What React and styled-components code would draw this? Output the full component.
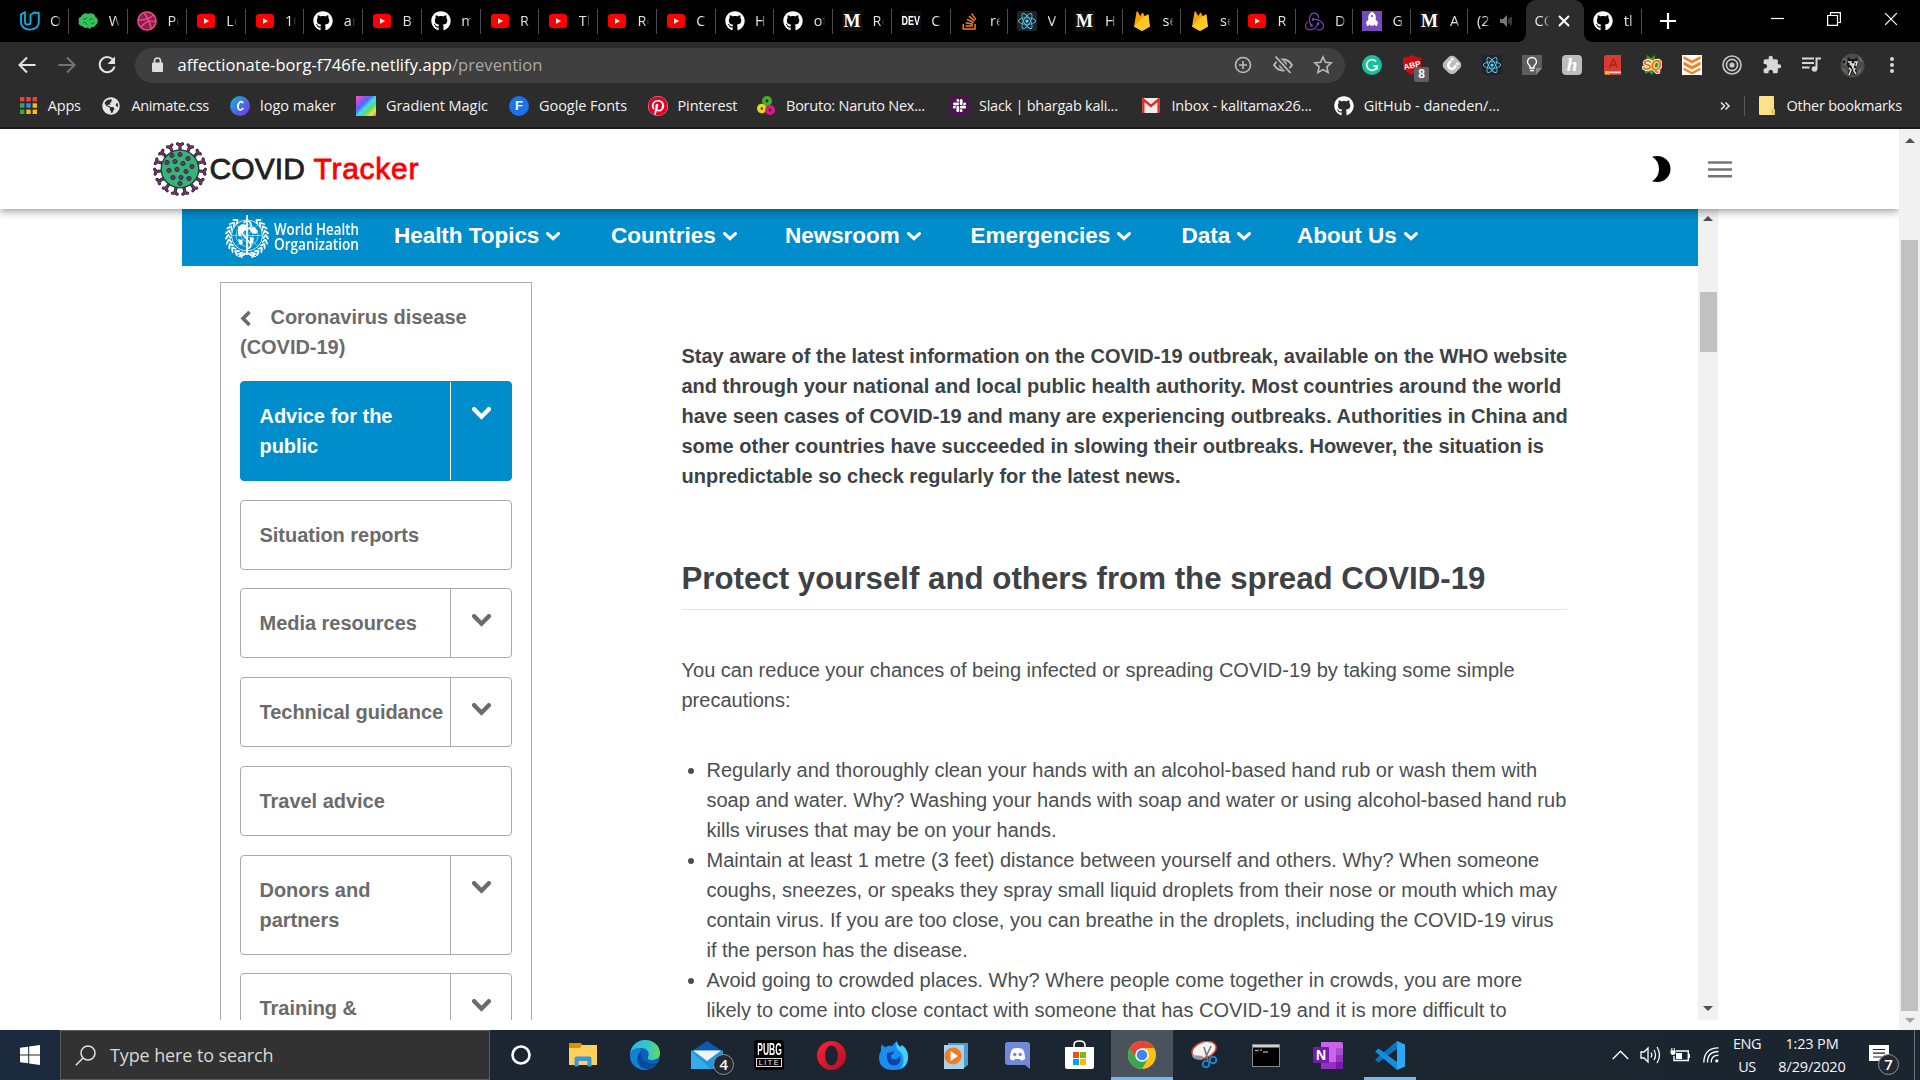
import React from "react";
import styled, { createGlobalStyle } from "styled-components";
import { FaGithub, FaDribbble, FaStackOverflow, FaReact, FaPinterest, FaSlack, FaRocket, FaGlobeAmericas } from "react-icons/fa";
import { SiRedux } from "react-icons/si";

const UI = `"Open Sans", "Noto Sans", sans-serif`;
const ARIAL = `"Liberation Sans", Arial, sans-serif`;
const BLUE = "#008dcb";

const GlobalStyle = createGlobalStyle`
  * { box-sizing: border-box; }
  html, body { margin: 0; padding: 0; overflow: hidden; background: #fff; }
  svg { display: block; flex: none; }
`;

const Screen = styled.div`
  display: flex;
  flex-direction: column;
  width: 1920px;
  height: 1080px;
  overflow: hidden;
  font-family: ${UI};
`;

/* ---------- browser chrome ---------- */

const Chrome = styled.div`
  flex: none;
  height: 129px;
  background: #2c2c2c;
  border-bottom: 2px solid #1b1b1d;
`;

const TabStrip = styled.div`
  display: flex;
  height: 42px;
  padding-left: 10.6px;
  background: #000;
`;

const Tab = styled.div`
  position: relative;
  display: flex;
  align-items: center;
  flex: none;
  width: ${(p) => (p.$wide ? 58.75 : 57.5)}px;
  height: 42px;
  padding-left: 9px;
  background: ${(p) => (p.$active ? "#2c2c2c" : "transparent")};
  border-radius: 10px 10px 0 0;
  &::after {
    content: "";
    position: absolute;
    right: 0;
    top: 9px;
    width: 1px;
    height: 25px;
    background: ${(p) => (p.$noLine ? "transparent" : "#4c4c4c")};
  }
`;

const TabFoot = styled.span`
  position: absolute;
  bottom: 0;
  ${(p) => (p.$right ? "right: -8px;" : "left: -8px;")}
  width: 8px;
  height: 8px;
  background: radial-gradient(circle at ${(p) => (p.$right ? "100% 0" : "0 0")}, #000 7.5px, #2c2c2c 8px);
`;

const TabIcon = styled.span`
  display: flex;
  align-items: center;
  justify-content: center;
  width: 20px;
  height: 20px;
`;

const TabText = styled.span`
  width: ${(p) => p.$w || 11}px;
  margin-left: ${(p) => (p.$w ? 0 : 10.5)}px;
  overflow: hidden;
  white-space: nowrap;
  font-size: 14.5px;
  line-height: 20px;
  color: #e6e6e6;
  mask-image: linear-gradient(90deg, #000 55%, transparent);
`;

const TabEnd = styled.span`
  display: flex;
  margin-left: ${(p) => p.$gap}px;
`;

const DevMark = styled.span`
  flex: none;
  font: bold 12.5px/20px ${ARIAL};
  transform: scaleX(0.72);
`;

const WindowControls = styled.div`
  display: flex;
  align-items: center;
  gap: 43px;
  height: 37px;
  margin-left: auto;
  padding-right: 22px;
`;

const PlusSlot = styled.div`
  display: flex;
  align-items: center;
  margin-left: 18px;
`;

const Toolbar = styled.div`
  display: flex;
  align-items: center;
  height: 46px;
`;

const NavButtons = styled.div`
  display: flex;
  align-items: center;
  gap: 20px;
  width: 135px;
  padding-left: 17px;
`;

const UrlBar = styled.div`
  display: flex;
  align-items: center;
  width: 1210px;
  height: 35px;
  padding: 0 12px 0 16px;
  border-radius: 18px;
  background: #3f3f3f;
`;

const Url = styled.span`
  margin-left: 13.5px;
  flex: 1;
  font-size: 16.5px;
  line-height: 24px;
  letter-spacing: 0.06px;
  color: #fff;
  span { color: #a9a9a9; }
`;

const UrlActions = styled.div`
  display: flex;
  align-items: center;
  gap: 20px;
`;

const Extensions = styled.div`
  display: flex;
  margin-left: 7px;
`;

const Ext = styled.div`
  position: relative;
  display: flex;
  align-items: center;
  justify-content: center;
  width: 40px;
  height: 40px;
`;

const ExtTile = styled.span`
  display: flex;
  align-items: center;
  justify-content: center;
  width: 20px;
  height: 20px;
  border-radius: ${(p) => p.$r || 0}px;
  background: ${(p) => p.$bg || "transparent"};
  color: ${(p) => p.$fg || "#fff"};
  font: ${(p) => p.$font || `bold 14px ${ARIAL}`};
`;

const ExtBadge = styled.span`
  position: absolute;
  left: 22px;
  top: 22px;
  width: 15px;
  height: 15px;
  border-radius: 2px;
  background: #5f6163;
  color: #fff;
  font: bold 12px/15px ${ARIAL};
  text-align: center;
`;

const Bookmarks = styled.div`
  display: flex;
  align-items: center;
  height: 35px;
  padding-left: 19.5px;
`;

const Bookmark = styled.div`
  display: flex;
  align-items: center;
  flex: none;
  width: ${(p) => p.$w}px;
`;

const BookmarkIcon = styled.span`
  display: flex;
  width: ${(p) => p.$w}px;
`;

const BookmarkText = styled.span`
  white-space: nowrap;
  font-size: 14.5px;
  line-height: 20px;
  letter-spacing: ${(p) => p.$ls || 0}px;
  color: #f1f1f1;
`;

const Divider = styled.span`
  width: 1px;
  height: 20px;
  margin: 0 14px 0 12px;
  background: #5a5a5a;
`;

/* ---------- page ---------- */

const Page = styled.div`
  display: flex;
  height: 901px;
  background: #fff;
`;

const PageBody = styled.div`
  width: 1899px;
  overflow: hidden;
`;

const AppHeader = styled.header`
  position: relative;
  z-index: 2;
  display: flex;
  align-items: center;
  height: 80px;
  padding-left: 153px;
  background: #fff;
  box-shadow: 0 2.5px 5px -1.25px rgba(0, 0, 0, 0.2), 0 5px 6.25px 0 rgba(0, 0, 0, 0.14), 0 1.25px 12.5px 0 rgba(0, 0, 0, 0.12);
`;

const Brand = styled.h1`
  flex: 1;
  margin: 0 0 0 2.5px;
  font: 400 30px/40px ${ARIAL};
  letter-spacing: 0.1px;
  color: #212121;
  -webkit-text-stroke: 0.8px currentColor;
  span {
    color: #ff0000;
    letter-spacing: 0.75px;
  }
`;

const HeaderTools = styled.div`
  display: flex;
  align-items: center;
  gap: 37.5px;
  padding-right: 167px;
`;

const Frame = styled.section`
  display: flex;
  width: 1536px;
  height: 811px;
  margin-left: 182px;
  overflow: hidden;
`;

const FrameBody = styled.div`
  width: 1516px;
  height: 811px;
  overflow: hidden;
`;

const WhoBar = styled.nav`
  display: flex;
  height: 57px;
  padding: 6px 0 0 41px;
  background: ${BLUE};
`;

const WhoName = styled.div`
  width: 120px;
  margin-left: 3px;
  padding-top: 5.5px;
  color: #fff;
`;

const WhoWord = styled.div`
  width: max-content;
  font: 600 17px/15.7px ${UI};
  white-space: nowrap;
  transform: scaleX(${(p) => p.$squeeze});
  transform-origin: 0 0;
`;

const NavItem = styled.div`
  display: flex;
  width: ${(p) => p.$w}px;
  font: bold 22.5px/41px ${ARIAL};
  letter-spacing: -0.04px;
  white-space: nowrap;
  color: #fff;
  svg { margin: 17px 0 0 7px; }
`;

const Columns = styled.div`
  display: flex;
  padding: 16px 0 0 38px;
`;

const Sidebar = styled.aside`
  flex: none;
  width: 312px;
  height: 900px;
  padding: 19px 19px 0;
  border: 1px solid #a9a9a9;
`;

const BackLink = styled.div`
  height: 78.95px;
  font: bold 20px/30px ${ARIAL};
  letter-spacing: -0.03px;
  color: #6b6b6b;
  svg { display: inline-block; margin: -3px 19px -3px -0.5px; vertical-align: baseline; }
`;

const SideItem = styled.div`
  display: flex;
  width: 272px;
  height: ${(p) => (p.$tall ? 100 : 70)}px;
  margin-bottom: 18.75px;
  border: 1px solid ${(p) => (p.$active ? BLUE : "#a9a9a9")};
  border-radius: 4px;
  background: ${(p) => (p.$active ? BLUE : "#fff")};
  color: ${(p) => (p.$active ? "#fff" : "#6b6b6b")};
`;

const SideLabel = styled.div`
  width: 209px;
  padding: 19px 0 0 18.5px;
  font: bold 20px/30px ${ARIAL};
  letter-spacing: -0.03px;
  white-space: nowrap;
`;

const SideToggle = styled.div`
  width: 61px;
  padding: 25px 0 0 20.5px;
  border-left: 1px solid ${(p) => (p.$active ? "#fff" : "#a9a9a9")};
`;

const Article = styled.article`
  width: 885px;
  margin-left: 149.5px;
  padding-top: 59px;
  font: 20px/30px ${ARIAL};
  color: #4a4f52;
  white-space: nowrap;
`;

const Lead = styled.p`
  margin: 0;
  font-weight: bold;
  color: #3c4245;
`;

const Heading = styled.h2`
  margin: 66px 0 0;
  padding-bottom: 9px;
  border-bottom: 1px solid #e2e3e4;
  font: bold 31.25px/43px ${ARIAL};
  color: #3c4245;
`;

const Para = styled.p`
  margin: 45px 0 0;
`;

const List = styled.ul`
  margin: 40px 0 0;
  padding: 0 0 0 25px;
`;

/* ---------- scrollbars ---------- */

const Track = styled.div`
  display: flex;
  flex-direction: column;
  align-items: center;
  flex: none;
  width: ${(p) => p.$w}px;
  height: ${(p) => p.$h}px;
  padding: ${(p) => p.$pad};
  background: #f1f1f1;
`;

const Thumb = styled.div`
  width: 17px;
  height: ${(p) => p.$h}px;
  margin-top: ${(p) => p.$top}px;
  background: #c1c1c1;
`;

const Arrow = styled.div`
  width: 0;
  height: 0;
  border: 5px solid transparent;
  ${(p) => (p.$down ? `margin-top: auto; border-bottom: 0; border-top-color: ${p.$c};` : `border-top: 0; border-bottom-color: ${p.$c};`)}
`;

/* ---------- taskbar ---------- */

const Taskbar = styled.div`
  display: flex;
  height: 50px;
  background: linear-gradient(90deg, #1b2a3d 0, #1c2632 500px, #1b2530 100%);
`;

const Start = styled.div`
  display: flex;
  align-items: center;
  width: 60px;
  padding-left: 20px;
`;

const Search = styled.div`
  display: flex;
  align-items: center;
  width: 430px;
  padding-left: 14px;
  border: 1px solid #5c5c5c;
  background: #323232;
  color: #d8d8d8;
  font-size: 18px;
  line-height: 26px;
  letter-spacing: -0.11px;
  svg { margin-right: 14px; }
`;

const Apps = styled.div`
  display: flex;
`;

const TaskApp = styled.div`
  position: relative;
  display: flex;
  align-items: center;
  justify-content: center;
  width: 62.1px;
  height: 50px;
  background: ${(p) => (p.$active ? "#4a525b" : "transparent")};
  &::after {
    content: "";
    position: absolute;
    bottom: 0;
    left: ${(p) => (p.$active ? 0 : 5)}px;
    right: ${(p) => (p.$active ? 0 : 5)}px;
    height: 3px;
    background: ${(p) => (p.$open ? "#76b9ed" : "transparent")};
  }
`;

const Count = styled.span`
  position: absolute;
  left: ${(p) => p.$x}px;
  top: 24px;
  width: 21px;
  height: 21px;
  border: 1.5px solid #8d9399;
  border-radius: 50%;
  background: #23292f;
  color: #fff;
  font: 600 15px/18px ${UI};
  text-align: center;
`;

const Pubg = styled.span`
  display: flex;
  flex-direction: column;
  align-items: center;
  width: 30px;
  height: 30px;
  padding-top: 2px;
  border-radius: 3px;
  background: #000;
  color: #fff;
  font: bold 17px/16px ${ARIAL};
  b { display: block; transform: scaleX(0.5); }
  small {
    width: 26px;
    height: 9px;
    border: 1px solid #ddd;
    font: 7px/7px ${ARIAL};
    letter-spacing: 1.6px;
    text-align: center;
  }
`;

const Tray = styled.div`
  display: flex;
  align-items: center;
  margin-left: auto;
  color: #fff;
`;

const TrayIcon = styled.span`
  position: relative;
  display: flex;
  align-items: center;
  width: ${(p) => p.$w}px;
  height: 50px;
`;

const TrayText = styled.div`
  width: ${(p) => p.$w}px;
  margin-right: ${(p) => p.$gap}px;
  padding-top: ${(p) => p.$drop || 0}px;
  font-size: 14.5px;
  line-height: 22.7px;
  letter-spacing: ${(p) => p.$ls}px;
  text-align: center;
  white-space: nowrap;
  color: #f4f4f4;
`;

const ShowDesktop = styled.span`
  width: 6px;
  height: 50px;
  border-left: 1px solid #6a737c;
`;

/* ---------- drawings ---------- */

const YouTube = () => (
  <svg width="18" height="14" viewBox="0 0 18 14"><rect width="18" height="14" rx="3" fill="#f00" /><path d="M7 4.2v5.6L12 7z" fill="#fff" /></svg>
);
const GitHub = () => <FaGithub size={20} color="#fff" />;
const Udacity = () => (
  <svg width="20" height="20" viewBox="0 0 20 20" fill="none" stroke="#02b3e4" strokeWidth="1.8" strokeLinejoin="round"><path d="M1 3.5 5 1v10c0 3.6 5.5 3.6 5.5 0V4L14 1.5 18.8 2v9c0 10-17.8 10.5-17.8 0zM10.5 4v9.5" /></svg>
);
const Brain = () => (
  <svg width="20" height="17" viewBox="0 0 20 17"><path d="M3 4C4 1 8-1 10 1c3-2 7 0 7.5 3 3 1.5 3 6 .5 7.5-1 3-4 3-5 2.500l-1 2.500-2-2c-3 1-5 0-5.500-1.500C.5 13 0 10 1 8 0 6 1 4.500 3 4z" fill="#35c15d" /><path d="M5 5l2 2 2-3m2 4 2-3 2 2M5 10l2-1 2 3m4-2 2 1 1-2" stroke="#177a3a" strokeWidth="1" fill="none" /></svg>
);
const Medium = () => (
  <ExtTile $bg="#12100e" $font={`bold 18px "Liberation Serif", serif`}>M</ExtTile>
);
const Firebase = () => (
  <svg width="16" height="20" viewBox="0 0 16 20"><path d="M0 15.500 2.500.8c.1-.6.8-.7 1.100-.2L6.300 5 8 2c.3-.5.9-.5 1.100 0L16 15.500l-7 4q-1 .6-2 0z" fill="#ffa000" /><path d="M0 15.500 9.500 6l4-2.500q1-.5 1.100.4L16 15.500l-7 4q-1 .6-2 0z" fill="#ffca28" /></svg>
);
const ReactTile = () => (
  <ExtTile $bg="#20232a" $r={2}><FaReact size={18} color="#61dafb" /></ExtTile>
);
const Speaker = () => (
  <svg width="12" height="12" viewBox="0 0 12 12"><path d="M0 4h3l4-4v12L3 8H0z" fill="#777" /><path d="M9 3.500v5M11 2v8" stroke="#777" /></svg>
);
const Cross = ({ size, width, color = "#fff" }) => (
  <svg width={size} height={size} viewBox="0 0 12 12"><path d="M1 1l10 10M11 1 1 11" stroke={color} strokeWidth={width} /></svg>
);
const Slack = () => <ExtTile $bg="#4a154b"><FaSlack size={15} color="#fff" /></ExtTile>;

const Virus = () => {
  const spikes = Array.from({ length: 15 }, (_, i) => i * 24);
  const spots = [[19, 14], [27, 13], [35, 17], [14, 21], [22, 20], [30, 22], [39, 25], [16, 29], [24, 28], [33, 30], [20, 36], [28, 36], [36, 37], [27, 42]];
  return (
    <svg width="54" height="54" viewBox="0 0 54 54">
      {spikes.map((a) => (
        <g key={a} transform={`rotate(${a} 27 27)`}>
          <path d="M27 10V3M24.600 1.800q2.400 1.600 4.800 0" fill="none" stroke="#2a1c2c" strokeWidth="3.200" strokeLinecap="round" />
          <path d="M27 10V3M24.600 1.800q2.400 1.600 4.800 0" fill="none" stroke="#74336f" strokeWidth="1.800" strokeLinecap="round" />
        </g>
      ))}
      <circle cx="27" cy="27" r="18.800" fill="#38b27a" stroke="#1d3b33" strokeWidth="1.300" />
      {spots.map(([x, y]) => (
        <circle key={`${x}-${y}`} cx={x} cy={y - 0.5} r="2.100" fill="#74336f" stroke="#232b2c" strokeWidth="0.900" />
      ))}
    </svg>
  );
};

const WhoEmblem = () => {
  const leaves = Array.from({ length: 10 }, (_, i) => 35 + i * 14);
  return (
    <svg width="48" height="43" viewBox="0 0 48 43" fill="none" stroke="#fff">
      <circle cx="24" cy="20.500" r="15.500" strokeWidth="0.800" />
      <circle cx="24" cy="20.500" r="11" strokeWidth="0.500" />
      <circle cx="24" cy="20.500" r="6" strokeWidth="0.500" />
      <path d="M8.500 20.500h31M13 9.500l22 22M35 9.500l-22 22" strokeWidth="0.500" />
      <path d="M15 12l4-3 4 1v4l-4 3-2 5-2-3zM26 13l5-1 4 4-2 3-4-1zM27 22l4 1-1 5-3 2zM15 24l4 1 1 4-3 1z" fill="#fff" stroke="none" />
      <path d="M24 0v40" strokeWidth="1.700" />
      <path d="M20.500 8q4-4 7 0t-3.500 6-4 5.500 4 5 3.500 4.500-3.500 5" strokeWidth="1.500" />
      {leaves.map((a) => (
        <g key={a} fill="#fff" stroke="none">
          <ellipse cx="24" cy="0.500" rx="1" ry="3.200" transform={`translate(0 1) rotate(${a} 24 20.500) rotate(55 24 .5)`} />
          <ellipse cx="24" cy="3.200" rx="0.900" ry="2.400" transform={`translate(0 1) rotate(${a} 24 20.500) rotate(120 24 3.200)`} />
          <ellipse cx="24" cy="0.500" rx="1" ry="3.200" transform={`translate(0 1) rotate(${-a} 24 20.500) rotate(-55 24 .5)`} />
          <ellipse cx="24" cy="3.200" rx="0.900" ry="2.400" transform={`translate(0 1) rotate(${-a} 24 20.500) rotate(-120 24 3.200)`} />
        </g>
      ))}
      <path d="M13 38.500q7 2 11-1 4 3 11 1M15 41.500q6 0 9-4 3 4 9 4" strokeWidth="1.100" />
    </svg>
  );
};

const Chevron = ({ w = 14, h = 9, s = 3.2 }) => (
  <svg width={w} height={h} viewBox={`0 0 ${w} ${h}`} fill="none" stroke="currentColor" strokeWidth={s} strokeLinecap="round">
    <path d={`M${s / 2} ${s / 2} L${w / 2} ${h - s * 0.75} L${w - s / 2} ${s / 2}`} />
  </svg>
);

const tabs = [
  [Udacity, "O"], [Brain, "W"], [() => <FaDribbble size={20} color="#ea4c89" style={{ background: "#8d1f4d", borderRadius: 10 }} />, "Po"], [YouTube, "Le"], [YouTube, "10"],
  [GitHub, "an"], [YouTube, "Bu"], [GitHub, "m"], [YouTube, "R"], [YouTube, "Tl"], [YouTube, "Re"], [YouTube, "C"],
  [GitHub, "H"], [GitHub, "ot"], [Medium, "Re"],
  [() => <ExtTile $bg="#0b0d0e"><DevMark>DEV</DevMark></ExtTile>, "C"],
  [() => <FaStackOverflow size={19} color="#f48024" />, "re"], [ReactTile, "V"], [Medium, "H"], [Firebase, "se"], [Firebase, "se"],
  [YouTube, "R"], [() => <SiRedux size={19} color="#764abc" />, "D"],
  [() => <ExtTile $bg="#744cbc"><FaRocket size={14} style={{ transform: "rotate(-45deg)" }} /></ExtTile>, "G"], [Medium, "A"],
];

const AppsGrid = () => {
  const c = ["#ea4335", "#ea4335", "#ea4335", "#34a853", "#4285f4", "#fbbc05", "#34a853", "#fbbc05", "#fbbc05"];
  return (
    <svg width="17" height="17" viewBox="0 0 17 17">
      {c.map((f, i) => <rect key={i} x={(i % 3) * 6.3} y={Math.floor(i / 3) * 6.3} width="4.400" height="4.400" fill={f} />)}
    </svg>
  );
};

const bookmarks = [
  [82.5, 28.3, AppsGrid, "Apps", -0.2],
  [128, 29.4, () => <FaGlobeAmericas size={18} color="#e4e4e4" />, "Animate.css", -0.33],
  [126, 30, () => (
    <svg width="20" height="20" viewBox="0 0 20 20"><defs><linearGradient id="lm" x2="1" y2="1"><stop stopColor="#12b8cc" /><stop offset="1" stopColor="#7a2ff0" /></linearGradient></defs><circle cx="10" cy="10" r="10" fill="url(#lm)" /><path d="M12.800 6.500Q11 4.500 9 7t-.5 6q2 2 4.500-.5" fill="none" stroke="#fff" strokeWidth="1.700" strokeLinecap="round" /></svg>
  ), "logo maker", 0],
  [153, 30, () => (
    <svg width="20" height="20" viewBox="0 0 20 20"><defs><linearGradient id="gm" x2="1" y2="1"><stop stopColor="#ff5ca8" /><stop offset=".2" stopColor="#b04df0" /><stop offset=".38" stopColor="#4f6bf5" /><stop offset=".52" stopColor="#43d9f0" /><stop offset=".68" stopColor="#58e058" /><stop offset=".85" stopColor="#f4e04c" /><stop offset="1" stopColor="#f55" /></linearGradient></defs><rect width="20" height="20" fill="url(#gm)" /></svg>
  ), "Gradient Magic", -0.05],
  [139, 30, () => <ExtTile $bg="#1a73e8" $r={10} $font={`bold 13px ${ARIAL}`}>F</ExtTile>, "Google Fonts", -0.05],
  [109, 29.5, () => <ExtTile $bg="#fff" $r={10}><FaPinterest size={20} color="#e60023" /></ExtTile>, "Pinterest", -0.1],
  [192, 29, () => (
    <svg width="18" height="20" viewBox="0 0 18 20" fill="none" strokeWidth="3.600"><circle cx="10" cy="5" r="3.200" stroke="#43b02a" /><circle cx="4.800" cy="12.500" r="3" stroke="#e6d51d" /><circle cx="13" cy="14" r="3.200" stroke="#e3148c" /></svg>
  ), "Boruto: Naruto Nex...", -0.24],
  [193, 30, Slack, "Slack | bhargab kali...", -0.25],
  [192, 29.4, () => (
    <svg width="18" height="15" viewBox="0 0 18 15"><rect width="18" height="15" rx="1.500" fill="#ededed" /><path d="M1.300 15V1.500L9 8l7.700-6.500V15" fill="none" stroke="#d93025" strokeWidth="2.400" /></svg>
  ), "Inbox - kalitamax26...", -0.15],
  [383, 29.7, GitHub, "GitHub - daneden/...", -0.03],
];

const sideItems = [
  { label: ["Advice for the", "public"], active: true, toggle: true },
  { label: ["Situation reports"] },
  { label: ["Media resources"], toggle: true },
  { label: ["Technical guidance"], toggle: true },
  { label: ["Travel advice"] },
  { label: ["Donors and", "partners"], toggle: true },
  { label: ["Training &", ""], toggle: true },
];

const navItems = [["Health Topics", 217], ["Countries", 174], ["Newsroom", 185.5], ["Emergencies", 211], ["Data", 115.5], ["About Us", 140]];

const lead = [
  "Stay aware of the latest information on the COVID-19 outbreak, available on the WHO website",
  "and through your national and local public health authority. Most countries around the world",
  "have seen cases of COVID-19 and many are experiencing outbreaks. Authorities in China and",
  "some other countries have succeeded in slowing their outbreaks. However, the situation is",
  "unpredictable so check regularly for the latest news.",
];

const precautions = [
  [
    "Regularly and thoroughly clean your hands with an alcohol-based hand rub or wash them with",
    "soap and water. Why? Washing your hands with soap and water or using alcohol-based hand rub",
    "kills viruses that may be on your hands.",
  ],
  [
    "Maintain at least 1 metre (3 feet) distance between yourself and others. Why? When someone",
    "coughs, sneezes, or speaks they spray small liquid droplets from their nose or mouth which may",
    "contain virus. If you are too close, you can breathe in the droplets, including the COVID-19 virus",
    "if the person has the disease.",
  ],
  [
    "Avoid going to crowded places. Why? Where people come together in crowds, you are more",
    "likely to come into close contact with someone that has COVID-19 and it is more difficult to",
  ],
];

const Lines = ({ of }) => of.map((t, i) => (
  <React.Fragment key={i}>{i > 0 && <br />}{t}</React.Fragment>
));

const extensions = [
  () => (
    <svg width="20" height="20" viewBox="0 0 20 20"><circle cx="10" cy="10" r="10" fill="#15c39a" /><path d="M14 6.500A5.300 5.300 0 1 0 15.200 11H11M15.200 11v3.500" fill="none" stroke="#fff" strokeWidth="1.700" /></svg>
  ),
  () => (
    <>
      <svg width="20" height="20" viewBox="0 0 20 20"><path d="M10 0q4 2.500 9 2.500V10q-1 7-9 10Q2 17 1 10V2.500Q6 2.500 10 0z" fill="#c70d10" /><text x="10" y="13" textAnchor="middle" fontFamily="Liberation Sans" fontWeight="bold" fontSize="8" fill="#fff" transform="rotate(-12 10 10)">ABP</text></svg>
      <ExtBadge>8</ExtBadge>
    </>
  ),
  () => (
    <svg width="20" height="20" viewBox="0 0 20 20"><rect x="2" y="2" width="16" height="16" rx="5" transform="rotate(45 10 10)" fill="#bdbdbd" /><g transform="rotate(40 10 10)"><path d="M6.500 4.500v6a3.500 3.500 0 0 0 7 0v-6" fill="none" stroke="#fff" strokeWidth="2.600" /><path d="M5 7.200h3M12 7.200h3" stroke="#bdbdbd" strokeWidth="1" /></g></svg>
  ),
  ReactTile,
  () => (
    <svg width="20" height="20" viewBox="0 0 20 20"><path d="M0 0h20v13l-6 7H0z" fill="#5d5d5d" /><path d="M20 13h-6v7z" fill="#8a8a8a" /><path d="M8 13v-2q-2.500-2-2.500-4a4.500 4.500 0 0 1 9 0q0 2-2.500 4v2zM8 15.500h4" fill="none" stroke="#fff" strokeWidth="1.400" /></svg>
  ),
  () => <ExtTile $bg="#bcbcbc" $r={4} $font={`italic bold 19px/20px "Liberation Serif", serif`}>h</ExtTile>,
  () => (
    <svg width="17" height="20" viewBox="0 0 17 20"><path d="M2 0h15v20H2q-2-1-2-2V2q0-2 2-2z" fill="#d93a32" /><path d="M2 16.500h15v1.800H2z" fill="#f3e5e0" /><path d="M1 16h4v4l-2-1-2 1z" fill="#f5b921" /><path d="M5.500 13 9 4.500h.8L13.300 13M7 10h5" fill="none" stroke="#a8251e" strokeWidth="1.500" /></svg>
  ),
  () => (
    <svg width="20" height="20" viewBox="0 0 20 20"><path d="M5 0l4 3 4-3v4l5-1-2 5 3 3-4 2 1 5-4-1-2 3-3-3-4 2V13l-3-3 4-3z" fill="#3d9a1e" /><text x="9.500" y="15" textAnchor="middle" fontFamily="Liberation Sans" fontWeight="bold" fontStyle="italic" fontSize="14" fill="#ff6a00" stroke="#fff" strokeWidth="1.800" paintOrder="stroke" letterSpacing="-1">SQ</text></svg>
  ),
  () => (
    <svg width="20" height="20" viewBox="0 0 20 20"><rect width="20" height="20" fill="#fff" /><path d="M1.500 1v3L10 8.500 18.500 4V1L10 5.500zM1.500 6.500v3.500l8.500 4.500 8.500-4.500V6.500L10 11zM1.500 12.500V15l8.500 4.500 8.500-4.500v-2.500L10 17z" fill="#f58220" /></svg>
  ),
  () => (
    <svg width="20" height="20" viewBox="0 0 20 20" fill="none" stroke="#c9c9c9"><circle cx="10" cy="10" r="9" strokeWidth="1.600" /><circle cx="10" cy="10" r="5.600" strokeWidth="1.600" /><circle cx="10" cy="10" r="2.600" fill="#c9c9c9" stroke="none" /></svg>
  ),
  () => (
    <svg width="20" height="20" viewBox="0 0 24 24"><path d="M20.500 11H19V7c0-1.100-.9-2-2-2h-4V3.500C13 2.120 11.880 1 10.500 1S8 2.120 8 3.500V5H4c-1.100 0-1.990.9-1.990 2v3.800H3.500c1.490 0 2.700 1.210 2.700 2.700s-1.210 2.700-2.700 2.700H2V20c0 1.100.9 2 2 2h3.800v-1.500c0-1.490 1.210-2.700 2.700-2.700 1.490 0 2.700 1.210 2.700 2.700V22H17c1.100 0 2-.9 2-2v-4h1.500c1.380 0 2.500-1.120 2.500-2.500S21.880 11 20.500 11z" fill="#d8d8d8" /></svg>
  ),
  () => (
    <svg width="20" height="18" viewBox="0 0 20 18"><path d="M0 2.500h12M0 7h12M0 11.500h7.500" stroke="#d8d8d8" strokeWidth="2" /><circle cx="12.500" cy="13" r="2.800" fill="#d8d8d8" /><path d="M14.500 13V2.500H19" fill="none" stroke="#d8d8d8" strokeWidth="2" /></svg>
  ),
  () => (
    <svg width="25" height="25" viewBox="0 0 25 25"><circle cx="12.500" cy="12.500" r="12" fill="#4a4d49" /><path d="M3 6l4 2-3 4M19 4l3 5M3 16l4 4M21 16l-3 4" stroke="#757873" strokeWidth="1.400" /><path d="M8 4l2 2h5l2-2 1 7-2 3 1 7-3 1-1-4-2 4-3-1 1-6-2-3z" fill="#161716" /><path d="M8 9h3l-1 3M14 9h3l-1 4M11.500 11h2.500l-1 4zM9 15l2 2-2 5M15 15l-1 3 2 3" stroke="#e0e0e0" strokeWidth="1.500" fill="none" /></svg>
  ),
  () => (
    <svg width="6" height="20" viewBox="0 0 6 20" fill="#d8d8d8"><circle cx="3" cy="4" r="2" /><circle cx="3" cy="10" r="2" /><circle cx="3" cy="16" r="2" /></svg>
  ),
];

const taskApps = [
  { I: () => <svg width="20" height="20" viewBox="0 0 20 20"><circle cx="10" cy="10" r="8.500" fill="none" stroke="#fff" strokeWidth="2.600" /></svg> },
  { I: () => (
    <svg width="28" height="24" viewBox="0 0 28 24"><path d="M0 0h12l2 3v3H0z" fill="#d99100" /><path d="M0 5h11l2-3h15v20H0z" fill="#ffd15c" /><path d="M5.500 23.500v-8q0-2 2-2h13q2 0 2 2v8h-4V18h-9v5.500z" fill="#3a96dd" /></svg>
  ) },
  { I: () => (
    <svg width="30" height="30" viewBox="0 0 30 30"><defs><linearGradient id="e1" x2="1"><stop stopColor="#2bb5e8" /><stop offset=".6" stopColor="#35c9c4" /><stop offset="1" stopColor="#62dc5e" /></linearGradient></defs><circle cx="15" cy="15" r="15" fill="#0c62b5" /><path d="M0 14C1 5 8 0 15 0c9 0 15 6 15 13 0 5-4 7-8 7-3 0-5-1-4-3 2-3 0-9-7-9C5 8 1 11 0 14z" fill="url(#e1)" /><path d="M0 14c1-5 8-7 12-4-4 2-5 7-3 11 2 5 7 7 12 7C12 33-1 27 0 14z" fill="#1181d6" /><path d="M12 10.500c-3 8 4 15 15 12.500-2 3-5 5-8 6C8 30 3 18 12 10.500z" fill="#0b4a98" /></svg>
  ) },
  { count: 4, I: () => (
    <svg width="32" height="29" viewBox="0 0 32 29"><path d="M1 10 16 0l15 10z" fill="#0a5bb0" /><path d="M0 9.500h32V28H0z" fill="#2195dd" /><path d="M2 9.500h28L16 20z" fill="#f3f3f3" /><path d="M0 10l20 18H0z" fill="#35ace9" /></svg>
  ) },
  { I: () => <Pubg><b>PUBG</b><small>LITE</small></Pubg> },
  { I: () => (
    <svg width="29" height="29" viewBox="0 0 29 29"><defs><linearGradient id="o" y2="1"><stop stopColor="#ff2136" /><stop offset="1" stopColor="#b0101d" /></linearGradient></defs><path fillRule="evenodd" d="M14.500 0a14.500 14.500 0 1 1 0 29 14.500 14.500 0 0 1 0-29zm0 4.500c-4 0-6.300 4.500-6.300 10s2.300 10 6.300 10 6.300-4.500 6.300-10-2.300-10-6.300-10z" fill="url(#o)" /></svg>
  ) },
  { I: () => (
    <svg width="29" height="29" viewBox="0 0 29 29"><path d="M2 10Q1 6 3 3q1 3 4 3 3-2 6-1 2-3 5-5 0 4 4 6 0-1 1-2 6 5 6 12 0 13-14.500 13T0 16q0-3 2-6z" fill="#1a8df0" /><path d="M18 0q0 4 4 6 0-1 1-2 6 5 6 12 0 9-8 12 5-5 3-12-1-5-5-7-3-3-1-9z" fill="#3fd0ff" /><path d="M8 12q4 0 6.500-2Q15 13 12 14q-1 5 5 4.500 3-1 4-4 2 9-6 10Q7 24 8 12z" fill="#1242a8" /></svg>
  ) },
  { I: () => (
    <svg width="26" height="27" viewBox="0 0 26 27"><path d="M5 1h20v22l-4 3H5z" fill="#4d9ecb" /><path d="M1 3h20v24H1z" fill="#a8d3e8" /><circle cx="10" cy="14" r="8.500" fill="#f47b20" /><path d="M7.500 9v10l7.500-5z" fill="#fff" /></svg>
  ) },
  { I: () => (
    <svg width="25" height="27" viewBox="0 0 25 27"><path d="M3 0h19q3 0 3 3v24l-5-4H3q-3 0-3-3V3q0-3 3-3z" fill="#7289da" /><path d="M5 17q0-7 2.500-10 3-1.500 5-1 2 0 5 1Q20 10 20 17q-2 1.500-4 1.500l-1-1.500h-5l-1 1.500Q7 18.500 5 17z" fill="#fff" /><circle cx="9.800" cy="12.500" r="1.700" fill="#7289da" /><circle cx="15.200" cy="12.500" r="1.700" fill="#7289da" /></svg>
  ) },
  { I: () => (
    <svg width="29" height="30" viewBox="0 0 29 30"><path d="M9 8V5q0-4 5.500-4T20 5v3" fill="none" stroke="#fff" strokeWidth="1.600" /><path d="M0 7h29v20q0 2-2 2H2q-2 0-2-2z" fill="#fff" /><path d="M8 12h6v6H8z" fill="#f25022" /><path d="M15 12h6v6h-6z" fill="#7fba00" /><path d="M8 19h6v6H8z" fill="#00a4ef" /><path d="M15 19h6v6h-6z" fill="#ffb900" /></svg>
  ) },
  { active: true, open: true, I: () => (
    <svg width="28" height="28" viewBox="0 0 28 28"><circle cx="14" cy="14" r="14" fill="#fbc116" /><path d="M14 7h12.100A14 14 0 0 0 1.900 7l6 10.500z" fill="#ea4335" /><path d="M1.900 7A14 14 0 0 0 14 28l6-10.500-6 3.500-6-3.500z" fill="#34a853" /><circle cx="14" cy="14" r="6.800" fill="#fff" /><circle cx="14" cy="14" r="5.300" fill="#4285f4" /></svg>
  ) },
  { I: () => (
    <svg width="28" height="28" viewBox="0 0 28 28"><ellipse cx="14" cy="9" rx="12.500" ry="8" transform="rotate(-20 14 9)" fill="#f3f3f3" stroke="#d9403a" strokeWidth="1.500" /><path d="M2 14q0 5 10 5l1-4z" fill="#9a9a9a" /><path d="M14 6l4 13M21 5l-6 13" stroke="#777" strokeWidth="1.600" /><circle cx="16" cy="23" r="3.300" fill="none" stroke="#1787c8" strokeWidth="2" /><circle cx="23" cy="19" r="3.300" fill="none" stroke="#1787c8" strokeWidth="2" /></svg>
  ) },
  { I: () => (
    <svg width="28" height="23" viewBox="0 0 28 23"><rect x=".5" y=".5" width="27" height="22" fill="#000" stroke="#8b8b8b" /><path d="M1 1h26v2.500H1z" fill="#cfcfcf" /><path d="M3 6.500h2M6 5.500v2M8 6h2M11 8h5" stroke="#ddd" /></svg>
  ) },
  { I: () => (
    <svg width="30" height="27" viewBox="0 0 30 27"><path d="M8 0h20q2 0 2 2v23q0 2-2 2H8z" fill="#ca64ea" /><path d="M23 6h7v7h-7z" fill="#ae4bd5" /><path d="M23 13h7v7h-7z" fill="#9332bf" /><path d="M8 20h22v5q0 2-2 2H8z" fill="#7719aa" /><path d="M8 20h15v7H8z" fill="#9332bf" /><rect y="5" width="16" height="16" rx="1" fill="#7719aa" /><text x="8" y="18" textAnchor="middle" fontFamily="Liberation Sans" fontWeight="bold" fontSize="14" fill="#fff">N</text></svg>
  ) },
  { open: true, I: () => (
    <svg width="30" height="29" viewBox="0 0 30 29"><path d="M22 0 0 18.500l3.500 3L22 8z" fill="#0a72c0" /><path d="M22 29 0 10.500l3.500-3L22 21z" fill="#1b8cdb" /><path d="M22 0l8 3.500v22L22 29z" fill="#2fa8f3" /></svg>
  ) },
];

export default function App() {
  return (
    <Screen>
      <GlobalStyle />
      <Chrome>
        <TabStrip>
          {tabs.map(([Icon, text], i) => (
            <Tab key={i} $wide={i < 16}><TabIcon><Icon /></TabIcon><TabText>{text}</TabText></Tab>
          ))}
          <Tab $noLine><TabText $w={14}>(2</TabText><TabEnd $gap={9}><Speaker /></TabEnd></Tab>
          <Tab $active $wide $noLine>
            <TabFoot /><TabText $w={15}>CO</TabText><TabEnd $gap={8}><Cross size={12} width={2} /></TabEnd><TabFoot $right />
          </Tab>
          <Tab><TabIcon><GitHub /></TabIcon><TabText>tl</TabText></Tab>
          <PlusSlot>
            <svg width="16" height="16" viewBox="0 0 16 16"><path d="M8 0v16M0 8h16" stroke="#fff" strokeWidth="2.200" /></svg>
          </PlusSlot>
          <WindowControls>
            <svg width="13" height="12" viewBox="0 0 13 12"><path d="M0 5.500h13" stroke="#fff" strokeWidth="1.200" /></svg>
            <svg width="14" height="14" viewBox="0 0 14 14" fill="none" stroke="#fff" strokeWidth="1.200"><path d="M.6 3.500h9.900v9.900H.6zM3.500 3.500V.6h9.900v9.900h-2.900" /></svg>
            <Cross size={14} width={1.1} />
          </WindowControls>
        </TabStrip>
        <Toolbar>
          <NavButtons>
            <svg width="20" height="20" viewBox="0 0 20 20" fill="none" stroke="#e4e4e4" strokeWidth="2"><path d="M18.500 10H3M10 2.500 2.500 10l7.500 7.500" /></svg>
            <svg width="20" height="20" viewBox="0 0 20 20" fill="none" stroke="#747474" strokeWidth="2"><path d="M1.500 10H17M10 2.500l7.500 7.500-7.500 7.500" /></svg>
            <svg width="20" height="20" viewBox="0 0 20 20"><path d="M16.300 5.200A7.500 7.500 0 1 0 17.500 11.500" fill="none" stroke="#e4e4e4" strokeWidth="2" /><path d="M18 1.500V9h-7.500z" fill="#e4e4e4" /></svg>
          </NavButtons>
          <UrlBar>
            <svg width="13" height="16" viewBox="0 0 13 16"><rect x="1" y="5.500" width="11" height="9.500" rx="1" fill="#dedede" /><path d="M3.500 6V4q0-3 3-3t3 3v2" fill="none" stroke="#dedede" strokeWidth="1.600" /></svg>
            <Url>affectionate-borg-f746fe.netlify.app<span>/prevention</span></Url>
            <UrlActions>
              <svg width="20" height="20" viewBox="0 0 20 20" fill="none" stroke="#bcbcbc" strokeWidth="1.600"><circle cx="10" cy="10" r="7.500" /><path d="M10 6v8M6 10h8" /></svg>
              <svg width="20" height="20" viewBox="0 0 20 20" fill="none" stroke="#bcbcbc" strokeWidth="1.800"><path d="M1 10q3.500-5.500 9-5.500T19 10q-3.500 5.500-9 5.500T1 10z" /><circle cx="10" cy="10" r="3" /><path d="M2 1.500l16 17" stroke="#3f3f3f" strokeWidth="5" /><path d="M2.500 1.500l15 16.500" /></svg>
              <svg width="20" height="20" viewBox="0 0 20 20" fill="none" stroke="#bcbcbc" strokeWidth="1.600"><path d="m10 2 2.400 5.300 5.800.6-4.300 3.900 1.200 5.700L10 14.600l-5.100 2.900 1.200-5.700L1.800 7.900l5.800-.6z" /></svg>
            </UrlActions>
          </UrlBar>
          <Extensions>
            {extensions.map((Icon, i) => <Ext key={i}><Icon /></Ext>)}
          </Extensions>
        </Toolbar>
        <Bookmarks>
          {bookmarks.map(([w, iw, Icon, text, ls]) => (
            <Bookmark key={text} $w={w}><BookmarkIcon $w={iw}><Icon /></BookmarkIcon><BookmarkText $ls={ls}>{text}</BookmarkText></Bookmark>
          ))}
          <svg width="15" height="8" viewBox="-2 0 15 8" fill="none" stroke="#e4e4e4" strokeWidth="1.500"><path d="M2 .5 5.500 4 2 7.500M6.500.5 10 4 6.500 7.500" /></svg>
          <Divider />
          <BookmarkIcon $w={27.5}>
            <svg width="16" height="19" viewBox="0 0 16 19"><path d="M0 1q0-1 1-1h13q1 0 1 1v12h1v5q0 1-1 1H1q-1 0-1-1z" fill="#ffe08a" /><path d="M12.500 18.500V14q0-1 1-1H16v5" fill="#e8bf52" /></svg>
          </BookmarkIcon>
          <BookmarkText $ls={-0.25}>Other bookmarks</BookmarkText>
        </Bookmarks>
      </Chrome>

      <Page>
        <PageBody>
          <AppHeader>
            <Virus />
            <Brand>COVID <span>Tracker</span></Brand>
            <HeaderTools>
              <svg width="20" height="26" viewBox="0 0 20 26"><path d="M1 .8Q3.500 0 6.500 0a13 13 0 0 1 0 26Q3.500 26 1 25.200q7-4 7-12.200T1 .8z" fill="#000" /></svg>
              <svg width="24" height="17" viewBox="0 0 24 17"><path d="M0 1.500h24M0 8.500h24M0 15.200h24" stroke="#757575" strokeWidth="2.400" /></svg>
            </HeaderTools>
          </AppHeader>
          <Frame>
            <FrameBody>
              <WhoBar>
                <WhoEmblem />
                <WhoName>
                  <WhoWord $squeeze={0.785}>World Health</WhoWord>
                  <WhoWord $squeeze={0.8}>Organization</WhoWord>
                </WhoName>
                {navItems.map(([text, w]) => <NavItem key={text} $w={w}>{text}<Chevron /></NavItem>)}
              </WhoBar>
              <Columns>
                <Sidebar>
                  <BackLink>
                    <svg width="12" height="17" viewBox="0 0 12 17"><path d="M9.500 2 3 8.500 9.500 15" fill="none" stroke="#6b6b6b" strokeWidth="3.600" /></svg>
                    Coronavirus disease<br />(COVID-19)
                  </BackLink>
                  {sideItems.map(({ label, active, toggle }) => (
                    <SideItem key={label[0]} $active={active} $tall={label.length > 1}>
                      <SideLabel><Lines of={label} /></SideLabel>
                      {toggle && <SideToggle $active={active}><Chevron w={19} h={13} s={4.4} /></SideToggle>}
                    </SideItem>
                  ))}
                </Sidebar>
                <Article>
                  <Lead><Lines of={lead} /></Lead>
                  <Heading>Protect yourself and others from the spread COVID-19</Heading>
                  <Para>You can reduce your chances of being infected or spreading COVID-19 by taking some simple<br />precautions:</Para>
                  <List>{precautions.map((p, i) => <li key={i}><Lines of={p} /></li>)}</List>
                </Article>
              </Columns>
            </FrameBody>
            <Track $w={20} $h={811} $pad="7px 0 9px">
              <Arrow $c="#505050" />
              <Thumb $h={60} $top={71} />
              <Arrow $down $c="#505050" />
            </Track>
          </Frame>
        </PageBody>
        <Track $w={21} $h={901} $pad="9px 0 7px">
          <Arrow $c="#505050" />
          <Thumb $h={771} $top={97} />
          <Arrow $down $c="#a3a3a3" />
        </Track>
      </Page>

      <Taskbar>
        <Start>
          <svg width="20" height="20" viewBox="0 0 20 20"><path d="M0 2.800 8.200 1.700v7.800H0zM9.200 1.500 20 0v9.500H9.200zM0 10.500h8.200v7.800L0 17.200zM9.200 10.500H20V20L9.200 18.500z" fill="#fff" /></svg>
        </Start>
        <Search>
          <svg width="21" height="21" viewBox="0 0 21 21" fill="none" stroke="#e4e4e4" strokeWidth="1.500"><circle cx="13" cy="8" r="7" /><path d="M8 13 .8 20.200" /></svg>
          Type here to search
        </Search>
        <Apps>
          {taskApps.map(({ I, active, open, count }, i) => (
            <TaskApp key={i} $active={active} $open={open}><I />{count && <Count $x={37}>{count}</Count>}</TaskApp>
          ))}
        </Apps>
        <Tray>
          <TrayIcon $w={28}><svg width="17" height="10" viewBox="0 0 17 10"><path d="M.8 9 8.500 1.200 16.200 9" fill="none" stroke="#fff" strokeWidth="1.400" /></svg></TrayIcon>
          <TrayIcon $w={30}><svg width="21" height="18" viewBox="0 0 21 18" fill="none" stroke="#fff" strokeWidth="1.300"><path d="M1 6h3l4-4v14l-4-4H1zM11 6.500q1.500 2.500 0 5M14 4q3 5 0 10M17 1q5 8 0 16" /></svg></TrayIcon>
          <TrayIcon $w={33}><svg width="20" height="15" viewBox="0 0 20 15"><path d="M6 3h12.300v9.500H4V8M19.500 6v4" fill="none" stroke="#fff" strokeWidth="1.400" /><path d="M6 5h6v6H6zM.5 2.500h5V5q0 2-2.500 2T.5 5zM1.300 0h1v3h-1zM3.700 0h1v3h-1z" fill="#fff" /></svg></TrayIcon>
          <TrayIcon $w={30}><svg width="16" height="16" viewBox="0 0 16 16" fill="none" stroke="#fff" strokeWidth="1.300"><path d="M.8 15.500Q1 1 15.500.8M4.500 15.500q0-11 11-11M8.200 15.500q0-7.300 7.300-7.300" /><circle cx="13.800" cy="13.800" r="1.600" fill="#fff" stroke="none" /></svg></TrayIcon>
          <TrayText $w={28} $gap={17} $ls={-0.5} $drop={2}>ENG<br />US</TrayText>
          <TrayText $w={68} $gap={23} $ls={-0.15} $drop={1}>1:23 PM<br />8/29/2020</TrayText>
          <TrayIcon $w={45}>
            <svg width="20" height="21" viewBox="0 0 20 21"><path d="M0 0h20v16h-6l-4 5v-5H0z" fill="#fff" /><path d="M4 4.500h12M4 8.200h12M4 12h12" stroke="#1b2530" strokeWidth="1.200" /></svg>
            <Count $x={9}>7</Count>
          </TrayIcon>
          <ShowDesktop />
        </Tray>
      </Taskbar>
    </Screen>
  );
}
